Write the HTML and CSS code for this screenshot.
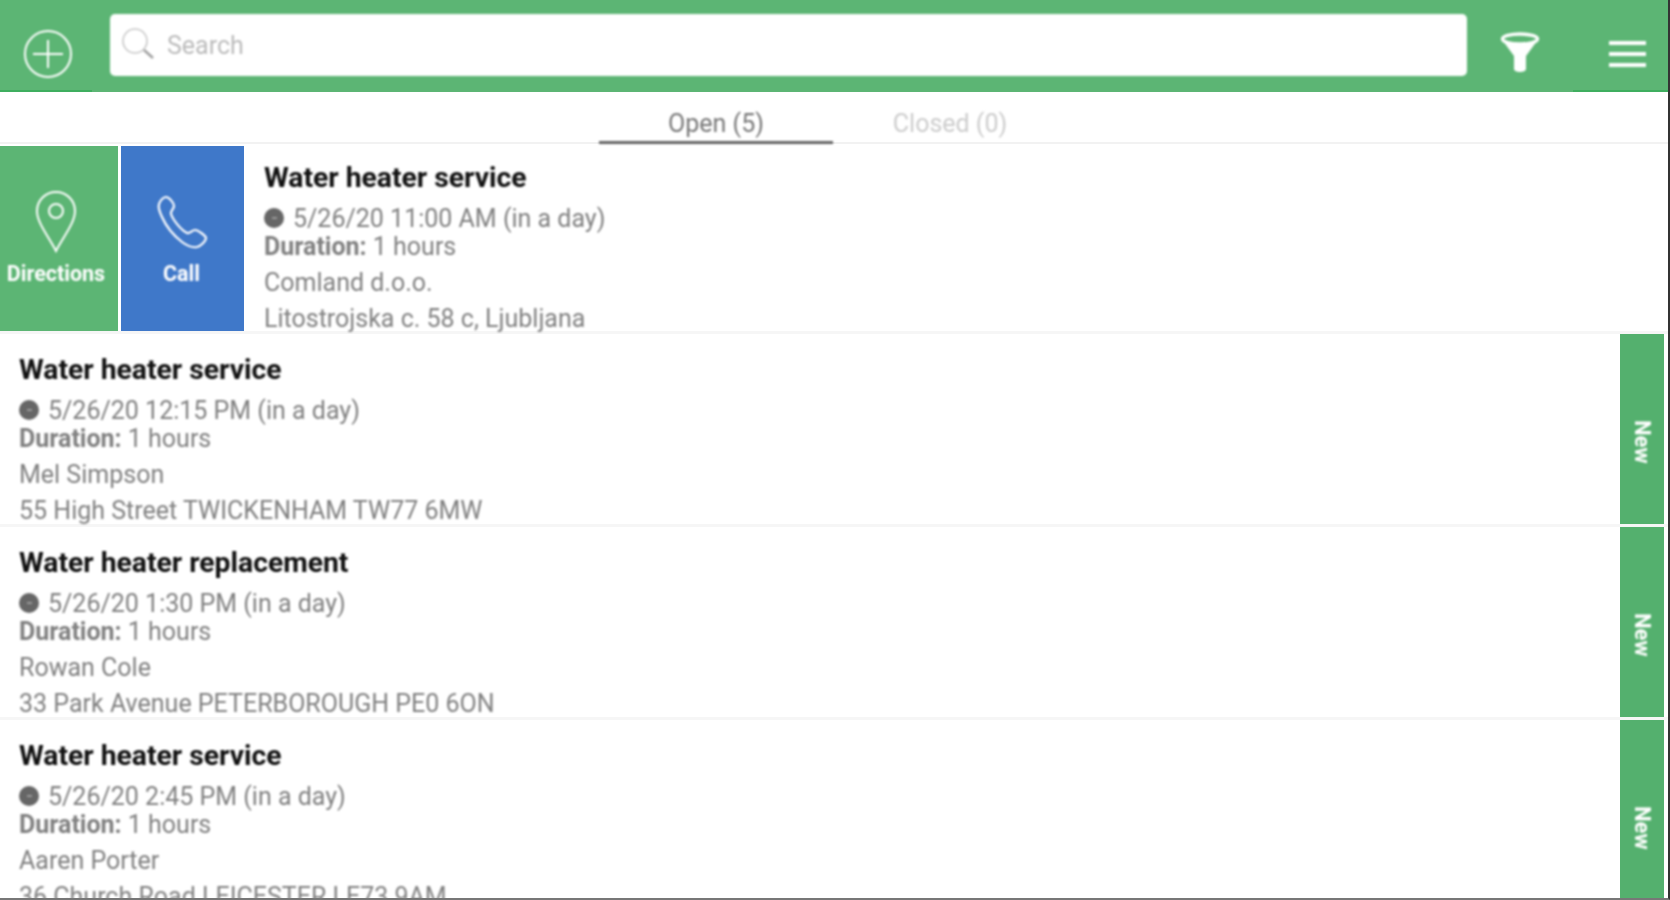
FILE: index.html
```html
<!DOCTYPE html>
<html lang="en">
<head>
    <meta charset="UTF-8">
    <meta name="viewport" content="width=device-width, initial-scale=1.0">
    <title>Work orders</title>
    <link rel="stylesheet" href="styles.css">
</head>
<body>
    <div class="app">
        <div class="header">
            <button class="icon-button add-button" aria-label="Add">
                <svg width="50" height="50" viewBox="0 0 50 50" fill="none" stroke="#fff" stroke-width="2"><circle cx="25" cy="25" r="23"/><path d="M25 11v28M10 25h30"/></svg>
            </button>
            <div class="search-box">
                <svg width="36" height="36" viewBox="0 0 36 36" fill="none"><circle cx="14" cy="14" r="12" stroke="#c8c8c8" stroke-width="1.6"/><path d="M23 23l9 8" stroke="#a0a0a0" stroke-width="2.4"/></svg>
                <span>Search</span>
            </div>
            <button class="icon-button filter-button" aria-label="Filter">
                <svg width="40" height="41" viewBox="0 0 40 41" fill="none"><ellipse cx="20" cy="7" rx="17.5" ry="5" stroke="#fff" stroke-width="3.4"/><path d="M3 9l11 15v13c0 4 12 4 12 0V24L37 9c-5 5-29 5-34 0z" fill="#fff"/></svg>
            </button>
            <button class="icon-button menu-button" aria-label="Menu">
                <span></span><span></span><span></span>
            </button>
        </div>

        <div class="tabs">
            <div class="tab active">Open (5)</div>
            <div class="tab">Closed (0)</div>
        </div>

        <div class="list">
            <div class="row first-row">
                <div class="action directions">
                    <svg width="42" height="63" viewBox="0 0 42 63" fill="none" stroke="#fff" stroke-width="2"><path d="M21 61C14 47 2 33 2 21a19 19 0 0 1 38 0c0 12-12 26-19 40z"/><circle cx="21" cy="21" r="7"/></svg>
                    <span>Directions</span>
                </div>
                <div class="action call">
                    <svg width="52" height="63" viewBox="0 -5 52 63" fill="none" stroke="#fff" stroke-width="2.2"><path d="M3 9c-1 4 1 9 3 13 4 9 11 18 20 25 4 3 10 6 15 5 4-1 9-6 9-9 0-2-8-8-11-8-3 0-5 4-8 3-6-3-14-13-16-19-1-3 3-5 3-8S13 2 10 2C7 2 4 6 3 9z"/></svg>
                    <span>Call</span>
                </div>
                <div class="details">
                    <div class="title">Water heater service</div>
                    <div class="date"><i class="dot"></i>5/26/20 11:00 AM (in a day)</div>
                    <div class="duration"><b>Duration:</b> 1 hours</div>
                    <div class="client">Comland d.o.o.</div>
                    <div class="address">Litostrojska c. 58 c, Ljubljana</div>
                </div>
            </div>

            <div class="row">
                <div class="details">
                    <div class="title">Water heater service</div>
                    <div class="date"><i class="dot"></i>5/26/20 12:15 PM (in a day)</div>
                    <div class="duration"><b>Duration:</b> 1 hours</div>
                    <div class="client">Mel Simpson</div>
                    <div class="address">55 High Street TWICKENHAM TW77 6MW</div>
                </div>
                <div class="status"><span>New</span></div>
            </div>

            <div class="row">
                <div class="details">
                    <div class="title">Water heater replacement</div>
                    <div class="date"><i class="dot"></i>5/26/20 1:30 PM (in a day)</div>
                    <div class="duration"><b>Duration:</b> 1 hours</div>
                    <div class="client">Rowan Cole</div>
                    <div class="address">33 Park Avenue PETERBOROUGH PE0 6ON</div>
                </div>
                <div class="status"><span>New</span></div>
            </div>

            <div class="row">
                <div class="details">
                    <div class="title">Water heater service</div>
                    <div class="date"><i class="dot"></i>5/26/20 2:45 PM (in a day)</div>
                    <div class="duration"><b>Duration:</b> 1 hours</div>
                    <div class="client">Aaren Porter</div>
                    <div class="address">36 Church Road LEICESTER LE73 9AM</div>
                </div>
                <div class="status"><span>New</span></div>
            </div>
        </div>
    </div>
</body>
</html>
```

FILE: styles.css
```css
html, body {
    margin: 0;
    padding: 0;
    background: #fff;
}

.app {
    box-sizing: border-box;
    width: 1670px;
    height: 900px;
    overflow: hidden;
    display: flex;
    flex-direction: column;
    border-right: 2px solid #333;
    border-bottom: 2px solid #777;
    font-family: Roboto, "Liberation Sans", sans-serif;
    font-size: 25px;
    color: #808080;
}

/* the screenshot is soft, so text and icons are softened too */
.header > *,
.tab,
.details,
.action svg,
.action span,
.status span {
    filter: blur(0.8px);
}

.header {
    flex: none;
    position: relative;
    height: 92px;
    background: #5cb574;
    display: flex;
    align-items: flex-start;
}

/* darker edge under the two corner buttons */
.header::before,
.header::after {
    content: "";
    position: absolute;
    bottom: 0;
    height: 2px;
    background: #3fae5f;
}

.header::before {
    left: 0;
    width: 92px;
}

.header::after {
    right: 0;
    width: 95px;
}

.icon-button {
    background: none;
    border: none;
    padding: 0;
    display: flex;
    flex: none;
}

.add-button {
    margin: 29px 37px 0 23px;
}

.search-box {
    box-sizing: border-box;
    flex: none;
    width: 1357px;
    height: 62px;
    margin-top: 14px;
    padding: 13px 0 0 11px;
    background: #fff;
    border-radius: 5px;
    display: flex;
    align-items: flex-start;
    gap: 10px;
    color: #bbb;
}

.search-box span {
    line-height: 32px;
    padding-top: 3px;
}

.filter-button {
    margin: 32px 0 0 33px;
}

.menu-button {
    width: 37px;
    margin: 41px 0 0 69px;
    flex-direction: column;
    gap: 7px;
}

.menu-button span {
    height: 4px;
    background: #fff;
}

.tabs {
    flex: none;
    box-sizing: border-box;
    height: 52px;
    display: flex;
    justify-content: center;
    border-bottom: 2px solid #f2f2f2;
    padding-right: 2px;
}

.tab {
    width: 234px;
    height: 52px;
    box-sizing: border-box;
    text-align: center;
    line-height: 64px;
    color: #ccc;
}

.tab.active {
    color: #777;
    border-bottom: 3px solid #666;
}

.row {
    box-sizing: border-box;
    height: 193px;
    display: flex;
    border-bottom: 3px solid #f6f6f6;
}

.first-row {
    height: 190px;
}

.action {
    flex: none;
    box-sizing: border-box;
    margin-top: 2px;
    padding-top: 44px;
    display: flex;
    flex-direction: column;
    align-items: center;
    gap: 9px;
    color: #fff;
    font-size: 21.5px;
    font-weight: 700;
    line-height: 24px;
}

.directions {
    width: 118px;
    margin-right: 3px;
    padding-right: 6px;
    background: #5cb574;
}

.call {
    width: 123px;
    padding-right: 2px;
    background: #3f78c9;
}

.details {
    flex: 1;
    padding: 14px 0 0 19px;
}

.first-row .details {
    padding-left: 20px;
    padding-top: 12px;
}

.title {
    line-height: 40px;
    margin-bottom: 7px;
    padding-top: 2px;
    color: #111;
    font-size: 28.3px;
    font-weight: 700;
}

.date {
    line-height: 28px;
    margin-bottom: -1px;
    display: flex;
    align-items: center;
}

.dot {
    position: relative;
    width: 20px;
    height: 20px;
    margin: -2px 9px 0 0;
    border-radius: 50%;
    background: #666;
}

/* small clock mark inside the dot */
.dot::after {
    content: "";
    position: absolute;
    left: 8px;
    top: 9px;
    width: 5px;
    height: 2px;
    background: #999;
}

.duration {
    line-height: 29px;
}

.client {
    line-height: 36px;
    margin-top: 4px;
}

.address {
    line-height: 36px;
}

.status {
    flex: none;
    width: 44px;
    margin-right: 4px;
    padding-top: 26px;
    box-sizing: border-box;
    background: #54b06e;
    display: flex;
    align-items: center;
    justify-content: center;
    color: #fff;
    font-size: 22px;
    font-weight: 700;
}

.status span {
    writing-mode: vertical-rl;
}
```
